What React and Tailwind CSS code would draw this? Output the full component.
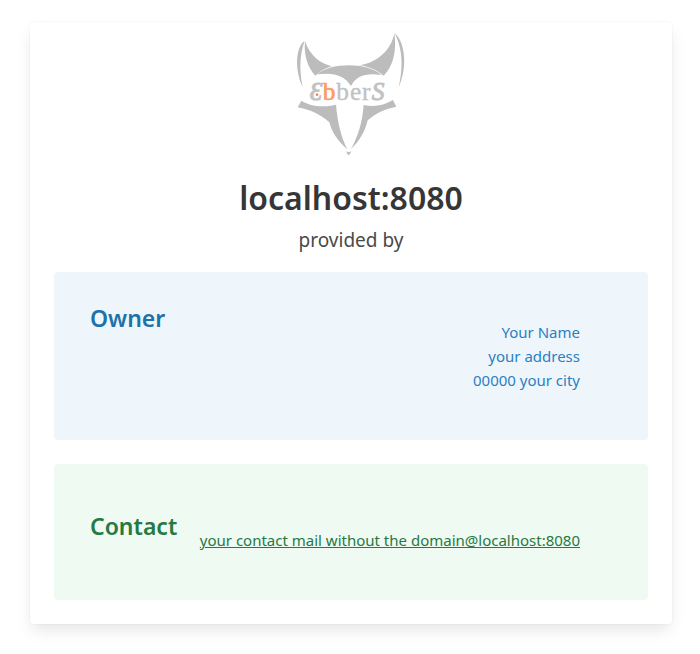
function Logo() {
  return (
    <svg viewBox="30 30 336 384" className="h-32 w-28" role="img" aria-label="Ebbers">
      <g fill="#bcbcbc">
        <path d="M59 63 C34 78 26 145 53 202 C43 155 43 105 59 63Z" />
        <path d="M60 64 C75 107 104 129 140 139 C120 145 105 153 91 167 C68 143 56 107 60 64Z" />
        <path d="M329 39 C361 68 368 139 341 202 C354 140 354 90 329 39Z" />
        <path d="M328 40 C317 95 276 126 225 136 C253 140 276 151 296 167 C323 142 336 95 328 40Z" />
        <path d="M96 163 C133 129 244 124 289 165 C246 158 213 166 198 198 C179 166 146 156 96 163Z" />
        <path d="M49 242 C74 257 108 265 153 254 C158 310 169 352 187 388 C157 362 141 337 133 307 C105 282 75 269 38 262Z" />
        <path d="M324 240 C296 256 270 262 236 255 C232 309 218 351 198 387 C225 362 240 334 248 301 C275 277 300 267 334 260Z" />
        <path d="M184 394 Q191 399 199 394 Q195 405 191 405 Q187 405 184 394Z" />
      </g>
      <g fontFamily="'Liberation Serif', serif" fontSize="76" fill="#c2c2c2" stroke="#c2c2c2" strokeWidth="1">
        <text x="74" y="241" fontStyle="italic" strokeWidth="3">Ɛ</text>
        <text x="113" y="241" fill="#ff9b61" stroke="#ff9b61" strokeWidth="2">b</text>
        <text x="154" y="241">b</text>
        <text x="195" y="241">e</text>
        <text x="231" y="241">r</text>
        <text x="260" y="241" fontStyle="italic" strokeWidth="3">S</text>
      </g>
      <circle cx="96" cy="224" r="4" fill="#ff8540" />
    </svg>
  );
}

export default function App() {
  return (
    <div className="bg-white py-[22px] pr-7 pl-[30px] font-['Noto_Sans',sans-serif] text-[15px] text-[#4a4a4a]">
      <main className="rounded px-6 pt-2 pb-6 shadow-[0_8px_16px_-2px_rgba(10,10,10,0.1),0_0_0_1px_rgba(10,10,10,0.02)]">
        <header className="flex flex-col items-center text-center">
          <Logo />
          <h1 className="mt-[22px] text-[32px] leading-9 font-semibold text-[#363636]">localhost:8080</h1>
          <p className="mt-2.5 text-[19px] leading-7">provided by</p>
        </header>
        <section className="mt-[18px] flex justify-between gap-4 rounded bg-[#eef6fc] pt-8 pr-[68px] pb-12 pl-9 text-[#1d72aa]">
          <h2 className="text-[23px] leading-7 font-semibold">Owner</h2>
          <address className="pt-4 text-right leading-6 text-[#2b7fc0] not-italic">
            Your Name
            <br />
            your address
            <br />
            00000 your city
          </address>
        </section>
        <section className="mt-6 flex justify-between gap-4 rounded bg-[#effaf3] py-12 pr-[68px] pl-9 text-[#257942]">
          <h2 className="text-[23px] leading-7 font-semibold">Contact</h2>
          <a href="mailto:contact@localhost:8080" className="pt-4 leading-6 underline">
            your contact mail without the domain@localhost:8080
          </a>
        </section>
      </main>
    </div>
  );
}
